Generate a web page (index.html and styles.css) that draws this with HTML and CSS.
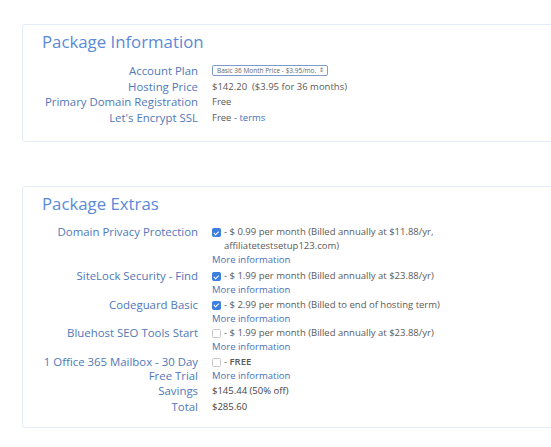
FILE: index.html
```html
<!DOCTYPE html>
<html>
<head>
<meta charset="utf-8">
<link rel="stylesheet" href="styles.css">
</head>
<body>
<div class="page">
  <section class="box box-info">
    <h2 class="title">Package Information</h2>
    <div class="rows">
      <div class="row">
        <div class="label">Account Plan</div>
        <div class="value"><span class="select">Basic 36 Month Price - $3.95/mo.<span class="arrows">&#8661;</span></span></div>
      </div>
      <div class="row">
        <div class="label">Hosting Price</div>
        <div class="value">$142.20 &nbsp;($3.95 for 36 months)</div>
      </div>
      <div class="row">
        <div class="label">Primary Domain Registration</div>
        <div class="value">Free</div>
      </div>
      <div class="row">
        <div class="label">Let's Encrypt SSL</div>
        <div class="value">Free - <a class="link">terms</a></div>
      </div>
    </div>
  </section>

  <section class="box box-extras">
    <h2 class="title">Package Extras</h2>
    <div class="rows">
      <div class="row row-first">
        <div class="label">Domain Privacy Protection</div>
        <div class="value">
          <div class="opt"><span class="cb on"></span><span class="opt-text">- $ 0.99 per month (Billed annually at $11.88/yr,<br>affiliatetestsetup123.com)</span></div>
          <a class="link">More information</a>
        </div>
      </div>
      <div class="row">
        <div class="label">SiteLock Security - Find</div>
        <div class="value">
          <div class="opt"><span class="cb on"></span><span class="opt-text">- $ 1.99 per month (Billed annually at $23.88/yr)</span></div>
          <a class="link">More information</a>
        </div>
      </div>
      <div class="row">
        <div class="label">Codeguard Basic</div>
        <div class="value">
          <div class="opt"><span class="cb on"></span><span class="opt-text">- $ 2.99 per month (Billed to end of hosting term)</span></div>
          <a class="link">More information</a>
        </div>
      </div>
      <div class="row">
        <div class="label">Bluehost SEO Tools Start</div>
        <div class="value">
          <div class="opt"><span class="cb"></span><span class="opt-text">- $ 1.99 per month (Billed annually at $23.88/yr)</span></div>
          <a class="link">More information</a>
        </div>
      </div>
      <div class="row">
        <div class="label">1 Office 365 Mailbox - 30 Day Free Trial</div>
        <div class="value">
          <div class="opt"><span class="cb"></span><span class="opt-text">- <b>FREE</b></span></div>
          <a class="link">More information</a>
        </div>
      </div>
      <div class="row row-sum">
        <div class="label">Savings</div>
        <div class="value strong">$145.44 (50% off)</div>
      </div>
      <div class="row row-sum">
        <div class="label">Total</div>
        <div class="value strong">$285.60</div>
      </div>
    </div>
  </section>
</div>
</body>
</html>
```

FILE: styles.css
```css
html, body {
  margin: 0;
  padding: 0;
  background: #ffffff;
  overflow: hidden;
}
body {
  font-family: "Open Sans", "Noto Sans", sans-serif;
  color: #555;
}
.page {
  width: 551px;
  overflow: hidden;
  padding: 24px 0 0 22px;
  box-sizing: border-box;
  display: flex;
  flex-direction: column;
  gap: 44px;
}
.box {
  flex: none;
  width: 560px;
  border: 1px solid #e3ecf7;
  border-radius: 3px;
  box-sizing: border-box;
  padding: 6px 0 0 19px;
}
.box-info {
  height: 118px;
}
.box-extras {
  height: 242px;
}
.title {
  margin: 0;
  font-size: 16.8px;
  font-weight: 400;
  color: #5b8ad8;
  line-height: 22px;
}
.rows {
  margin-top: 10px;
  display: flex;
  flex-direction: column;
}
.box-extras .rows { margin-top: 10px; }
.row {
  display: grid;
  grid-template-columns: 156px 1fr;
  column-gap: 14px;
}
.label {
  text-align: right;
  font-size: 11.4px;
  line-height: 14px;
  color: #5078b8;
}
.box-info .label { line-height: 15.6px; }
.value {
  font-size: 9.5px;
  line-height: 14px;
  color: #5a5a5a;
}
.box-info .value { line-height: 15.6px; }
.box-extras .row { margin-bottom: 0.5px; }
.box-extras .row-first { margin-bottom: 2px; }
.box-extras .row-sum .label,
.box-extras .row-sum .value { line-height: 15.5px; }
.strong { color: #444; }
.link {
  color: #4a6fb8;
  text-decoration: none;
}
.select {
  display: inline-flex;
  align-items: center;
  gap: 3px;
  height: 9px;
  border: 1px solid #7f9cc9;
  border-radius: 2px;
  font-size: 6.5px;
  line-height: 9px;
  color: #666;
  padding: 0 3px 0 4px;
  vertical-align: middle;
  box-sizing: content-box;
  margin-top: -2px;
  white-space: nowrap;
}
.arrows {
  font-size: 6px;
}
.opt {
  display: flex;
  align-items: flex-start;
}
.cb {
  flex: none;
  width: 7px;
  height: 7px;
  margin: 3px 3px 0 0;
  border: 1px solid #c9c9c9;
  border-radius: 1.5px;
  background: #fff;
  position: relative;
}
.cb.on {
  background: #3d7fe0;
  border-color: #3d7fe0;
}
.cb.on::after {
  content: "";
  position: absolute;
  left: 2.2px;
  top: 0.6px;
  width: 1.6px;
  height: 3.6px;
  border: solid #fff;
  border-width: 0 1px 1px 0;
  transform: rotate(45deg);
}
.opt-text b {
  font-weight: 600;
}
```
